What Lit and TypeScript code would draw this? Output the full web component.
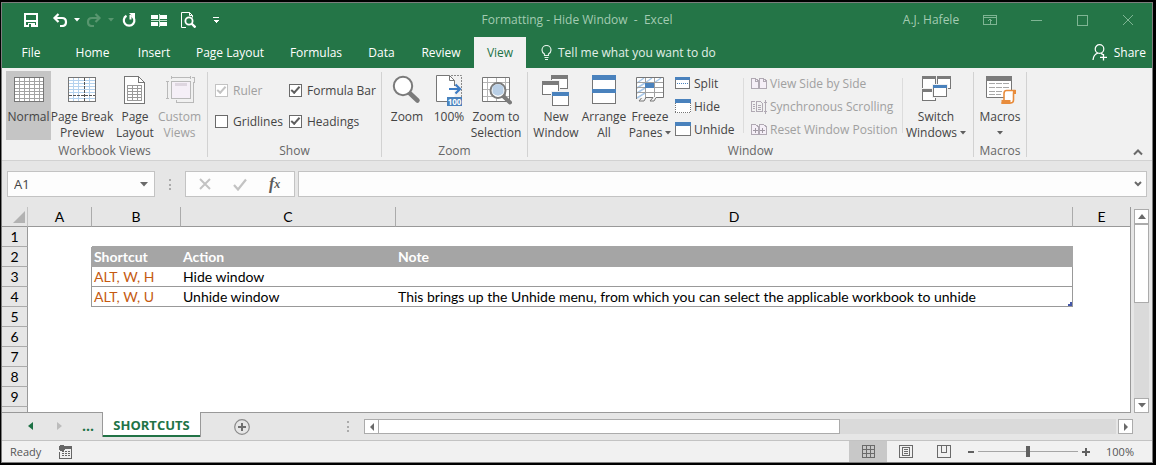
import { LitElement, html, svg, css, nothing, TemplateResult } from "lit";
import { customElement, property, state } from "lit/decorators.js";
import { classMap } from "lit/directives/class-map.js";
import { styleMap } from "lit/directives/style-map.js";

const GREY = "#767676";
const BLUE = "#4a82bd";

const icon = (w: number, h: number, body: unknown, crisp = true) => html`<svg
  width=${w} height=${h} viewBox="0 0 ${w} ${h}" fill="none" aria-hidden="true"
  shape-rendering=${crisp ? "crispEdges" : "auto"}>${body}</svg>`;

/* A small window outline with a coloured title strip. */
const pane = (x: number, y: number, w: number, h: number, bar: string, thick = 3) => svg`
  <rect x=${x - 1} y=${y - 1} width=${w + 2} height=${h + 2} fill="#f1f1f1"/>
  <rect x=${x + 0.5} y=${y + 0.5} width=${w - 1} height=${h - 1} fill="#fff" stroke=${GREY}/>
  <rect x=${x} y=${y} width=${w} height=${thick} fill=${bar}/>`;

const caret = (color = "#5f5f5f") =>
  icon(6, 4, svg`<path d="M0 0h6l-3 3.5z" fill=${color}/>`, false);

const icons: Record<string, TemplateResult> = {
  save: icon(14, 14, svg`<path d="M1 1h12v12H1zM1 8h12" stroke="#fff" stroke-width="2"/><path d="M4 10h7v4H4z" fill="#fff"/><path d="M5 11h2v3H5z" fill="#247547"/>`),
  undo: icon(16, 14, svg`<path d="M2 5h8q4 0 4 4t-4 4H8M6.500 1L2.500 5l4 4" stroke="#fff" stroke-width="2.200"/>`, false),
  redo: icon(16, 14, svg`<path d="M14 5H6Q2 5 2 9t4 4h2M9.500 1l4 4-4 4" stroke="#58966f" stroke-width="2.200"/>`, false),
  repeat: icon(14, 14, svg`<path d="M4.500 2.800A5.300 5.300 0 1 0 9.500 2.700" stroke="#fff" stroke-width="2.200"/><path d="M7 0h6v6z" fill="#fff"/><path d="M8.500 2v4.500" stroke="#fff" stroke-width="2"/>`, false),
  panes: icon(16, 13, svg`<path d="M0 1h7v4H0zM9 1h7v4H9zM0 8h7v4H0zM9 8h7v4H9z" fill="#fff"/><path d="M0 6.500h16M8 0v13" stroke="#bfe0cb"/>`),
  preview: icon(15, 16, svg`<path d="M5 15.500H.5V.5h8l3 3v2" stroke="#fff"/><path d="M8.500.5v3h3" stroke="#fff"/><circle cx="8" cy="9" r="3.600" stroke="#fff" stroke-width="1.800"/><path d="M10.500 11.500l4 4" stroke="#fff" stroke-width="2.400"/>`, false),
  customize: icon(6, 6, svg`<path d="M0 .5h6" stroke="#fff"/><path d="M0 3h6L3 6z" fill="#fff"/>`),
  ribbonOptions: icon(14, 10, svg`<path d="M.5.5h13v9H.5zM0 2.500h14M7 9V4M5 6l2-2 2 2" stroke="#7fb594"/>`),
  minimize: icon(11, 11, svg`<path d="M0 5.500h11" stroke="#7fb594"/>`),
  maximize: icon(11, 11, svg`<path d="M.5.5h10v10H.5z" stroke="#7fb594"/>`),
  close: icon(12, 12, svg`<path d="M1 1l10 10M11 1L1 11" stroke="#7fb594"/>`, false),
  bulb: icon(11, 15, svg`<path d="M3.500 10.500V9Q1 7.500 1 5a4.500 4.500 0 0 1 9 0q0 2.500-2.500 4v1.500zM3.500 12.500h4M4 14.500h3" stroke="#e2f0e7" stroke-width="1.200"/>`, false),
  share: icon(16, 17, svg`<circle cx="7.500" cy="5" r="4.300" stroke="#fff" stroke-width="1.200"/><path d="M1 16q.4-5.500 5-7M9 9.400l2 1.200M11.500 10v6.500M8 13.300h7" stroke="#fff" stroke-width="1.300"/>`, false),
  normal: icon(32, 32, svg`<path d="M1.500 2.500h29v24h-29z" fill="#fff" stroke=${GREY}/><path d="M6.500 3v23M11.500 3v23M16.500 3v23M21.500 3v23M26.500 3v23M2 6.500h28M2 9.500h28M2 13.500h28M2 16.500h28M2 19.500h28M2 23.500h28" stroke="#a3a3a3"/>`),
  pageBreak: icon(32, 32, svg`<path d="M2.500 2.500h27v24h-27z" fill="#fff"/><path d="M7.500 3v23M12.500 3v23M23.500 3v23M3 5.500h26M3 8.500h26M3 11.500h26M3 14.500h26M3 17.500h26M3 23.500h26" stroke="#b4d2ee"/><path d="M2.500 2.500h27v24h-27z" stroke=${GREY}/><path d="M18.500 3v23M3 20.500h26" stroke="#555" stroke-dasharray="3 1"/>`),
  pageLayout: icon(32, 32, svg`<path d="M5.500 1.500h14l6 6v21h-20z" fill="#fff" stroke=${GREY}/><path d="M19.500 1.500v6h6" stroke=${GREY}/><path d="M8.500 10.500h14v15h-14zM13.500 10v16M18.500 10v16M8 13.500h15M8 16.500h15M8 19.500h15M8 22.500h15" stroke="#9a9a9a"/>`),
  customViews: icon(32, 32, svg`<path d="M7.500 6.500h19v17h-19z" fill="#f5eff7" stroke="#b9b9b9"/><path d="M11 8h12v3H11z" fill="#ded6e0"/><path d="M7 2.500h20M7.500 1v3M26.500 1v3M3.500 6v18M2 6.500h3M2 23.500h3M29.500 7v20.500H12.500V25M28 2.500h2v5" stroke="#b9b9b9"/>`),
  zoom: icon(32, 32, svg`<path d="M18 17.500l8.500 8" stroke="#7b7b7b" stroke-width="4.500" stroke-linecap="round"/><circle cx="12" cy="11" r="9.200" fill="#fff" stroke="#7b7b7b" stroke-width="2"/>`, false),
  hundred: icon(32, 32, svg`<path d="M3.500.5h13l5 5v21h-18z" fill="#fff"/><path d="M16 26.500H3.500V.5h13l5 5V11M16.500.5v5h5" stroke=${GREY}/><path d="M18 .5h10.500V22" stroke="#8a8a8a" stroke-dasharray="2 1"/><path d="M16 14h11M22.500 9.500L27 14l-4.500 4.500" stroke="#3d7cc4" stroke-width="2.200"/><path d="M14 22h15v9H14z" fill=${BLUE}/><text x="21.500" y="29.500" text-anchor="middle" font-family="Open Sans" font-size="8" font-weight="700" fill="#fff">100</text>`, false),
  zoomSelection: icon(32, 32, svg`<path d="M2.500 2.500h27v24h-27z" fill="#fff" stroke=${GREY}/><path d="M7.500 3v23M16.500 3v23M25.500 3v23M3 7.500h26M3 14.500h26M3 21.500h26" stroke="#b5b5b5"/><path d="M23 21l7 6.500" stroke="#7b7b7b" stroke-width="4" stroke-linecap="round"/><circle cx="18" cy="15.500" r="7.500" fill="#fff" stroke="#7b7b7b" stroke-width="2"/><path d="M12.500 18V11.500q5.500-5 11 0V18q-5.500 5.500-11 0z" fill="#b9cfe6"/>`, false),
  newWindow: icon(32, 32, svg`${pane(11, 0, 17, 14, "#7b7b7b", 4)}${pane(2, 6, 17, 14, "#7b7b7b", 4)}${pane(12, 17, 17, 14, BLUE, 4)}`),
  arrange: icon(32, 32, svg`${pane(4, 0, 24, 15, BLUE, 5)}<path d="M4.500 14.500h23v14h-23z" fill="#fff" stroke=${GREY}/><path d="M4 14h24v4H4z" fill=${BLUE}/>`),
  freeze: icon(32, 32, svg`<path d="M2.500 2.500h27v20h-27z" fill="#fff"/><path d="M3 8l7-5M11 8l7-5M20 8l7-5M3 13l8-5M3 18l8-5M3 23l8-5" stroke="#a9c9ea" stroke-width="1.500"/><path d="M11.500 3v21M20.500 3v19M3 7.500h26M3 12.500h26M3 17.500h26" stroke="#a0a0a0"/><path d="M2.500 24V2.500h27v20H22l-2 3.500h-4l3-3.500h-7L10 26H5l2.500-3" stroke=${GREY}/><path d="M11 8h9v5h-9z" fill=${BLUE}/>`, false),
  split: icon(16, 13, svg`${pane(0, 0, 15, 12, BLUE, 3)}<path d="M2 6.500h11" stroke=${BLUE} stroke-dasharray="1 1"/>`),
  hide: icon(16, 15, svg`<path d="M0 1h16v13H0z" fill="#fff"/><path d="M.5 4v10M15.500 4v10M0 13.500h16" stroke=${GREY} stroke-dasharray="1 1"/><path d="M0 0h16v4H0z" fill=${BLUE}/>`),
  unhide: icon(16, 15, svg`${pane(0, 0, 16, 14, BLUE, 4)}`),
  sideBySide: icon(16, 13, svg`<path d="M.5 1.500h4l2.500 2v8H.5zM8.500 1.500h4l2.500 2v8H8.500z" fill="#f5eff7" stroke="#b0a9b3"/><path d="M4.500 1.500v3H7M12.500 1.500v3H15" stroke="#b0a9b3"/>`),
  sync: icon(16, 14, svg`<path d="M4 1.500H.5v10H4M5.500 1.500h4l2 2v8h-6zM2 4.500h2M2 6.500h2M2 8.500h2M7 5.500h3M7 7.500h3M7 9.500h3M14.500 0v14M13 2.500h3M13 11.500h3" stroke="#b0a9b3"/>`),
  resetPos: icon(16, 13, svg`<path d="M.5 1.500h4l2.500 2v8H.5zM8.500 1.500h4l2.500 2v8H8.500z" fill="#f5eff7" stroke="#b0a9b3"/><path d="M2 7.500h5M4.500 5v5M9 7.500h5M11.500 5v5" stroke="#9f98a2"/>`),
  switchWin: icon(32, 32, svg`${pane(2, 1, 14, 13, "#7b7b7b", 3)}${pane(17, 1, 14, 13, "#7b7b7b", 3)}${pane(2, 14, 14, 12, "#7b7b7b", 3)}${pane(13, 10, 14, 12, BLUE, 3)}`),
  macros: icon(32, 32, svg`<path d="M2.500 2.500h25v20h-25z" fill="#fff" stroke=${GREY}/><path d="M2 1h26v5H2z" fill="#7b7b7b"/><path d="M5 8.500h20M5 12.500h20M5 16.500h14M5 19.500h12" stroke="#a8a8a8" stroke-dasharray="6 1"/><path d="M22.500 15.500h9q-2 0-2 3v6.500q0 3-3 3h-9q2.500 0 2.500-3v-6.500q0-3 2.500-3z" fill="#fff" stroke="#e88c3c" stroke-width="1.600"/><path d="M28.500 15h4v4h-3zM17.500 25h9v4h-9z" fill="#e88c3c"/>`, false),
  tickGrey: icon(14, 13, svg`<path d="M1 7l4 4.500L13 1.500" stroke="#c3c3c3" stroke-width="2.200"/>`, false),
  crossGrey: icon(12, 12, svg`<path d="M1 1l10 10M11 1L1 11" stroke="#c3c3c3" stroke-width="2"/>`, false),
  chevronDown: icon(8, 6, svg`<path d="M1 1l3 3 3-3" stroke="#6a6a6a" stroke-width="2"/>`, false),
  chevronUp: icon(10, 7, svg`<path d="M1 5.500l4-4 4 4" stroke="#6a6a6a" stroke-width="2"/>`, false),
  corner: icon(12, 12, svg`<path d="M12 0v12H0z" fill="#b2b2b2"/>`, false),
  up: icon(8, 5, svg`<path d="M0 5h8L4 0z" fill="#6a6a6a"/>`, false),
  down: icon(8, 5, svg`<path d="M0 0h8L4 4.500z" fill="#6a6a6a"/>`, false),
  left: icon(4, 8, svg`<path d="M4 0v8L0 4z" fill="#6a6a6a"/>`, false),
  right: icon(4, 8, svg`<path d="M0 0v8l4-4z" fill="#6a6a6a"/>`, false),
  leftGreen: icon(5, 8, svg`<path d="M5 0v8L0 4z" fill="#1c7044"/>`, false),
  rightPale: icon(5, 8, svg`<path d="M0 0v8l5-4z" fill="#bcbcbc"/>`, false),
  add: icon(16, 16, svg`<circle cx="8" cy="8" r="7.300" stroke="#8a8a8a" stroke-width="1.200"/><path d="M8 4v8M4 8h8" stroke="#6f6f6f" stroke-width="2"/>`, false),
  macroRecord: icon(13, 14, svg`<path d="M3 5V3h9.500v10.500H.5V7" stroke="#666"/><path d="M6 1h7v3H6z" fill="#666"/><circle cx="3" cy="3" r="3" fill="#666"/><path d="M3 6.500h8M3 8.500h8M3 10.500h8" stroke="#666" stroke-dasharray="2 1"/>`),
  viewNormal: icon(13, 13, svg`<path d="M.5.5h12v12H.5zM4.500 0v13M8.500 0v13M0 4.500h13M0 8.500h13" stroke="#6a6a6a"/>`),
  viewLayout: icon(14, 13, svg`<path d="M.5.5h13v12H.5zM3.500 2.500h7v8h-7zM5 4.500h4M5 6.500h4M5 8.500h4" stroke="#6a6a6a"/>`),
  viewBreak: icon(14, 13, svg`<path d="M.5.5h13v12H.5zM4.500 0v7.500M9.500 0v7.500M4 7.500h6" stroke="#6a6a6a"/>`),
  minus: icon(6, 2, svg`<path d="M0 0h6v2H0z" fill="#606060"/>`),
  plus: icon(8, 8, svg`<path d="M3 0h2v8H3zM0 3h8v2H0z" fill="#606060"/>`),
};

interface Command {
  icon: string;
  label: string[];
  width: number;
  active?: boolean;
  disabled?: boolean;
  menu?: boolean;
}

@customElement("ribbon-button")
export class RibbonButton extends LitElement {
  @property({ attribute: false }) command!: Command;

  static styles = css`
    :host { display: block; flex: none; }
    button {
      width: 100%; height: 69px; border: 0; margin: 0; padding: 4px 0 0;
      display: flex; flex-direction: column; align-items: center;
      background: none; color: #444; font: 12px/16px "Open Sans", "Noto Sans", sans-serif;
      white-space: nowrap;
    }
    button.active { background: #c5c5c5; }
    button:disabled { color: #a0a0a0; }
    svg { flex: none; display: block; }
    .line { display: flex; align-items: center; gap: 3px; min-height: 16px; }
    .line:first-of-type { margin-top: 2px; }
  `;

  render() {
    const c = this.command;
    const last = c.label.length - 1;
    return html`<button type="button" class=${classMap({ active: !!c.active })} ?disabled=${c.disabled}>
      ${icons[c.icon]}
      ${c.label.map((t, i) => html`<span class="line">${t}${c.menu && i === last ? caret() : nothing}</span>`)}
    </button>`;
  }
}

const views: Command[] = [
  { icon: "normal", label: ["Normal"], width: 45, active: true },
  { icon: "pageBreak", label: ["Page Break", "Preview"], width: 62 },
  { icon: "pageLayout", label: ["Page", "Layout"], width: 44 },
  { icon: "customViews", label: ["Custom", "Views"], width: 45, disabled: true },
];
const zooms: Command[] = [
  { icon: "zoom", label: ["Zoom"], width: 42 },
  { icon: "hundred", label: ["100%"], width: 42 },
  { icon: "zoomSelection", label: ["Zoom to", "Selection"], width: 52 },
];
const windows: Command[] = [
  { icon: "newWindow", label: ["New", "Window"], width: 48 },
  { icon: "arrange", label: ["Arrange", "All"], width: 48 },
  { icon: "freeze", label: ["Freeze", "Panes"], width: 44, menu: true },
];
const tabs = [
  { name: "File", width: 58 }, { name: "Home", width: 65 }, { name: "Insert", width: 58 },
  { name: "Page Layout", width: 94 }, { name: "Formulas", width: 78 }, { name: "Data", width: 53 },
  { name: "Review", width: 66 }, { name: "View", width: 52 },
];
const records: Record<number, [string, string, string]> = {
  2: ["Shortcut", "Action", "Note"],
  3: ["ALT, W, H", "Hide window", ""],
  4: ["ALT, W, U", "Unhide window", "This brings up the Unhide menu, from which you can select the applicable workbook to unhide"],
};

@customElement("app-root")
export class AppRoot extends LitElement {
  @state() private tab = "View";

  static styles = css`
    :host {
      display: flex; flex-direction: column; height: 100vh; box-sizing: border-box;
      padding: 2px 3px 2px 1px; background: #000; color: #444; overflow: hidden;
      font: 12px/16px "Open Sans", "Noto Sans", sans-serif;
    }
    *, *::before { box-sizing: border-box; }
    svg { display: block; flex: none; }
    button {
      border: 0; margin: 0; padding: 0; background: none; color: inherit; font: inherit;
      display: flex; align-items: center; justify-content: center; white-space: nowrap; flex: none;
    }
    input { font: inherit; color: inherit; margin: 0; min-width: 0; }
    .frame { flex: 1; min-height: 0; display: flex; flex-direction: column; border: 1px solid #7d7d7d; background: #e6e6e6; }

    .titlebar { display: grid; grid-template-columns: 1fr auto 1fr; align-items: center; height: 34px; background: #247547; color: #a3cbb2; }
    .quick { display: flex; padding-left: 14px; align-items: center; }
    .quick button { width: 28px; height: 28px; }
    .quick .wide { width: 30px; }
    .quick .drop { width: 6px; }
    .title { white-space: pre; }
    .system { display: flex; justify-content: flex-end; align-items: center; padding-right: 1px; }
    .system button { width: 46px; height: 30px; }
    .system .user { width: 66px; padding-right: 6px; }

    .tabs { display: flex; height: 31px; background: #247547; color: #fff; }
    .tabs .tab { height: 31px; padding-top: 1px; }
    .tabs .selected { background: #f1f1f1; color: #217346; }
    .tell { gap: 6px; margin-left: 15px; color: #e2f0e7; }
    .share { gap: 6px; margin-left: auto; padding-right: 6px; }

    .ribbon { display: flex; height: 93px; padding-top: 4px; background: #f1f1f1; border-bottom: 1px solid #d2d2d2; flex: none; }
    .group { height: 85px; display: flex; flex-direction: column; border-right: 1px solid #d2d2d2; flex: none; }
    .group h2 { margin: 6px 0 0; font: inherit; color: #666; text-align: center; height: 12px; line-height: 12px; }
    .body { display: flex; height: 68px; padding: 0 4px; margin-top: -1px; }
    .views .body { padding-right: 5px; }
    .zooms .body { padding: 0 5px 0 4px; }
    .group .checks { display: grid; grid-template-columns: 74px 86px; grid-template-rows: 31px 31px; padding: 4px 6px 0 7px; align-items: center; }
    .checks label { display: flex; align-items: center; gap: 5px; white-space: nowrap; }
    .checks .off { color: #a0a0a0; }
    .checks input {
      appearance: none; width: 13px; height: 13px; border: 1px solid #6a6a6a; background: #fff; flex: none;
      display: grid; place-items: center;
    }
    .checks input:checked::before {
      content: ""; width: 9px; height: 5px; border: solid #5f5f5f; border-width: 0 0 2px 2px;
      transform: rotate(-48deg) translate(1px, -1px);
    }
    .checks input:disabled { border-color: #c3c3c3; }
    .checks input:disabled::before { border-color: #c3c3c3; }
    .stack { display: flex; flex-direction: column; padding: 1px 0 0 3px; width: 71px; }
    .stack.wide { width: 158px; padding-left: 7px; }
    .stack button { height: 23px; gap: 3px; justify-content: flex-start; }
    .stack button:disabled { color: #a0a0a0; }
    .rule { flex: none; width: 1px; height: 55px; margin-top: 7px; background: #dcdcdc; }
    .collapse { width: 20px; height: 16px; margin: 72px 4px 0 auto; }

    .formula { display: flex; padding: 10px 5px 0; height: 46px; align-items: flex-start; flex: none; }
    .box { display: flex; align-items: center; height: 26px; background: #fdfdfd; border: 1px solid #c3c3c3; }
    .box input { border: 0; background: none; padding: 0 6px; flex: 1; height: 24px; font-size: 13px; }
    .name { width: 148px; }
    .name button { width: 20px; height: 24px; }
    .grip { width: 2px; height: 11px; display: flex; flex-direction: column; justify-content: space-between; flex: none; }
    .grip i { width: 2px; height: 2px; background: #ababab; }
    .formula .grip { margin: 8px 14px 0; }
    .edit { width: 110px; margin-right: 3px; justify-content: space-around; padding: 0 2px; }
    .edit button { width: 30px; height: 24px; }
    .edit .fx { font: italic 700 16px/20px "Liberation Serif", serif; color: #5b5b5b; }
    .fx small { font-size: 12px; }
    .content { flex: 1; min-width: 0; }
    .content button { width: 16px; height: 24px; }

    .work { display: flex; flex: 1; min-height: 0; }
    .sheet { flex: 1; min-width: 0; overflow: hidden; border-right: 1px solid #999; border-bottom: 1px solid #999; background: #fff; }
    table { width: 100%; table-layout: fixed; border-collapse: separate; border-spacing: 0; color: #000; font: 14px/19px "Lato", sans-serif; }
    th, td { height: 20px; padding: 0 2px; overflow: hidden; white-space: nowrap; text-align: left; font-weight: 400; line-height: 19px; }
    .rowhead { width: 26px; } .a { width: 64px; } .b { width: 89px; } .c { width: 215px; } .e { width: 57px; }
    thead th { background: #e6e6e6; text-align: center; border-bottom: 1px solid #999; border-right: 1px solid #ababab; }
    thead th:last-child { border-right: 0; }
    thead th:first-child { border-right-color: #c3c3c3; padding: 3px 3px 3px 11px; }
    tbody th { background: #e6e6e6; text-align: center; border-right: 1px solid #999; border-bottom: 1px solid #ababab; padding: 0; }
    .above .b, .above .c, .above .d { border-bottom: 1px solid #a5a5a5; }
    .head .b, .head .c, .head .d { background: #a5a5a5; color: #fff; font-weight: 700; border-bottom: 1px solid #a5a5a5; }
    .rec .b, .rec .c, .rec .d { border-bottom: 1px solid #999; }
    .head .a { border-right: 1px solid #a5a5a5; }
    .rec .a, .rec .d { border-right: 1px solid #999; }
    .rec .b { color: #c55a11; }
    .row4 .d { background: linear-gradient(#4457a8, #4457a8) right bottom / 4px 2px no-repeat, linear-gradient(#4457a8, #4457a8) right bottom / 2px 4px no-repeat; }
    .vscroll { width: 15px; margin: 2px 3px 0; display: flex; flex-direction: column; background: #dadada; flex: none; }
    .vscroll button, .hscroll button { width: 15px; height: 15px; background: #fff; border: 1px solid #ababab; }
    .vscroll .thumb { height: 79px; background: #fff; border: 1px solid #ababab; margin-bottom: auto; }

    .sheets { display: flex; height: 27px; align-items: flex-start; flex: none; }
    .sheets .nav { width: 29px; height: 26px; }
    .sheets .first { margin-left: 14px; }
    .sheets .more { width: 28px; color: #217346; font-weight: 700; font-size: 14px; }
    .sheets .sheet-tab {
      width: 99px; height: 25px; margin-top: -1px; background: #fff; border: solid #999; border-width: 0 1px;
      box-shadow: inset 0 -2px #217346; color: #217346; font-weight: 700; font-size: 13px; z-index: 1;
    }
    .add { width: 40px; height: 27px; margin-left: 21px; }
    .sheets .grip { margin: 8px 15px 0 auto; }
    .hscroll { flex: 0 1 769px; display: flex; margin: 6px 19px 0 0; height: 15px; }
    .hscroll .track { flex: 1; background: #dadada; margin-right: 2px; }
    .hscroll .thumb { width: 62.5%; height: 15px; background: #fff; border: 1px solid #ababab; border-left: 0; }

    .status { display: flex; height: 22px; align-items: center; background: #f1f1f1; border-top: 1px solid #c3c3c3; padding: 0 18px 0 8px; flex: none; color: #555; font-size: 11px; }
    .record { margin: 0 auto 0 18px; }
    .view { width: 38px; height: 21px; }
    .view.on { background: #c8c8c8; }
    .step { height: 20px; }
    .minus { margin-left: 5px; }
    .status input { appearance: none; width: 100px; height: 12px; margin: 0 4px; background: linear-gradient(#a5a5a5, #a5a5a5) center / 100% 1px no-repeat; }
    .status input::-webkit-slider-thumb { appearance: none; width: 4px; height: 11px; background: #606060; }
    .percent { margin-left: 16px; }
  `;

  private large(c: Command) {
    return html`<ribbon-button .command=${c} style=${styleMap({ width: `${c.width}px` })}></ribbon-button>`;
  }

  private small(name: string, label: string, disabled = false) {
    return html`<button type="button" ?disabled=${disabled}>${icons[name]}${label}</button>`;
  }

  private check(label: string, checked: boolean, disabled = false) {
    return html`<label class=${classMap({ off: disabled })}>
      <input type="checkbox" .checked=${checked} ?disabled=${disabled} />${label}</label>`;
  }

  private grip() {
    return html`<span class="grip" aria-hidden="true"><i></i><i></i><i></i></span>`;
  }

  private row(n: number) {
    const r = records[n];
    const cls = { above: n === 1, head: n === 2, rec: n === 3 || n === 4, row4: n === 4 };
    return html`<tr class=${classMap(cls)}>
      <th scope="row">${n < 10 ? n : nothing}</th><td class="a"></td><td class="b">${r?.[0]}</td>
      <td class="c">${r?.[1]}</td><td class="d">${r?.[2]}</td><td class="e"></td></tr>`;
  }

  render() {
    return html`<div class="frame">
      <header class="titlebar">
        <div class="quick">
          <button class="wide" aria-label="Save">${icons.save}</button>
          <button aria-label="Undo">${icons.undo}</button>
          <button class="drop" aria-label="Undo history">${caret("#fff")}</button>
          <button aria-label="Redo" disabled>${icons.redo}</button>
          <button class="drop" aria-label="Redo history" disabled>${caret("#58966f")}</button>
          <button class="wide" aria-label="Repeat">${icons.repeat}</button>
          <button class="wide" aria-label="Freeze panes">${icons.panes}</button>
          <button aria-label="Print preview">${icons.preview}</button>
          <button aria-label="Customize toolbar">${icons.customize}</button>
        </div>
        <div class="title">Formatting - Hide Window  -  Excel</div>
        <div class="system">
          <button class="user">A.J. Hafele</button>
          <button aria-label="Ribbon display options">${icons.ribbonOptions}</button>
          <button aria-label="Minimize">${icons.minimize}</button>
          <button aria-label="Maximize">${icons.maximize}</button>
          <button aria-label="Close">${icons.close}</button>
        </div>
      </header>

      <nav class="tabs">
        ${tabs.map((t) => html`<button class=${classMap({ tab: true, selected: t.name === this.tab })}
          style=${styleMap({ width: `${t.width}px` })} @click=${() => (this.tab = t.name)}>${t.name}</button>`)}
        <button class="tell">${icons.bulb}Tell me what you want to do</button>
        <button class="share">${icons.share}Share</button>
      </nav>

      <section class="ribbon">
        <div class="group views">
          <div class="body">${views.map((c) => this.large(c))}</div>
          <h2>Workbook Views</h2>
        </div>
        <div class="group">
          <div class="body checks">
            ${this.check("Ruler", true, true)}${this.check("Formula Bar", true)}
            ${this.check("Gridlines", false)}${this.check("Headings", true)}
          </div>
          <h2>Show</h2>
        </div>
        <div class="group zooms">
          <div class="body">${zooms.map((c) => this.large(c))}</div>
          <h2>Zoom</h2>
        </div>
        <div class="group">
          <div class="body">
            ${windows.map((c) => this.large(c))}
            <div class="stack">
              ${this.small("split", "Split")}${this.small("hide", "Hide")}${this.small("unhide", "Unhide")}
            </div>
            <span class="rule"></span>
            <div class="stack wide">
              ${this.small("sideBySide", "View Side by Side", true)}
              ${this.small("sync", "Synchronous Scrolling", true)}
              ${this.small("resetPos", "Reset Window Position", true)}
            </div>
            <span class="rule"></span>
            ${this.large({ icon: "switchWin", label: ["Switch", "Windows"], width: 66, menu: true })}
          </div>
          <h2>Window</h2>
        </div>
        <div class="group">
          <div class="body">${this.large({ icon: "macros", label: ["Macros", ""], width: 44, menu: true })}</div>
          <h2>Macros</h2>
        </div>
        <button class="collapse" aria-label="Collapse the ribbon">${icons.chevronUp}</button>
      </section>

      <section class="formula">
        <div class="box name">
          <input aria-label="Name box" value="A1" />
          <button aria-label="Names">${icons.down}</button>
        </div>
        ${this.grip()}
        <div class="box edit">
          <button aria-label="Cancel" disabled>${icons.crossGrey}</button>
          <button aria-label="Enter" disabled>${icons.tickGrey}</button>
          <button class="fx" aria-label="Insert function">f<small>x</small></button>
        </div>
        <div class="box content">
          <input aria-label="Formula bar" />
          <button aria-label="Expand formula bar">${icons.chevronDown}</button>
        </div>
      </section>

      <main class="work">
        <div class="sheet">
          <table>
            <thead><tr>
              <th class="rowhead">${icons.corner}</th><th class="a">A</th><th class="b">B</th>
              <th class="c">C</th><th class="d">D</th><th class="e">E</th>
            </tr></thead>
            <tbody>${[1, 2, 3, 4, 5, 6, 7, 8, 9, 10].map((n) => this.row(n))}</tbody>
          </table>
        </div>
        <div class="vscroll">
          <button aria-label="Scroll up">${icons.up}</button>
          <div class="thumb"></div>
          <button aria-label="Scroll down">${icons.down}</button>
        </div>
      </main>

      <nav class="sheets">
        <button class="nav first" aria-label="Previous sheet">${icons.leftGreen}</button>
        <button class="nav" aria-label="Next sheet" disabled>${icons.rightPale}</button>
        <button class="nav more" aria-label="More sheets">...</button>
        <button class="sheet-tab">SHORTCUTS</button>
        <button class="add" aria-label="New sheet">${icons.add}</button>
        ${this.grip()}
        <div class="hscroll">
          <button aria-label="Scroll left">${icons.left}</button>
          <div class="track"><div class="thumb"></div></div>
          <button aria-label="Scroll right">${icons.right}</button>
        </div>
      </nav>

      <footer class="status">
        <span>Ready</span>
        <button class="record" aria-label="Record macro">${icons.macroRecord}</button>
        <button class="view on" aria-label="Normal view">${icons.viewNormal}</button>
        <button class="view" aria-label="Page layout view">${icons.viewLayout}</button>
        <button class="view" aria-label="Page break view">${icons.viewBreak}</button>
        <button class="step minus" aria-label="Zoom out">${icons.minus}</button>
        <input type="range" min="0" max="200" value="100" aria-label="Zoom level" />
        <button class="step" aria-label="Zoom in">${icons.plus}</button>
        <span class="percent">100%</span>
      </footer>
    </div>`;
  }
}
